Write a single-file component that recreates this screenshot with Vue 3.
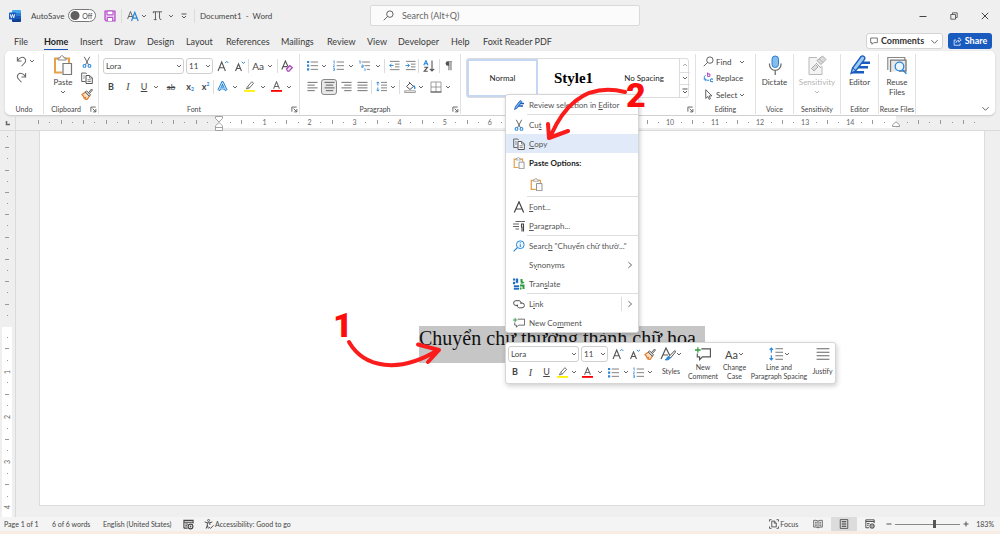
<script setup>
const tabs = ['File', 'Home', 'Insert', 'Draw', 'Design', 'Layout', 'References', 'Mailings', 'Review', 'View', 'Developer', 'Help', 'Foxit Reader PDF']

function marks(from, to, numbered) {
  const list = []
  for (let k = from; k <= to; k++) {
    if (numbered && k % 4 === 0) list.push({ k, kind: 'num', text: k / 4 })
    else list.push({ k, kind: k % 2 === 0 ? 'tick' : 'dot', text: '' })
  }
  return list
}
const left = marks(-16, -1, false)
const middle = marks(1, 59, true)
const right = marks(1, 7, false)
const above = marks(-17, -1, false)
const below = marks(1, 16, true)

const menu = [
  { icon: 'pen', label: ['Review selection in ', 'E', 'ditor'] },
  { line: true },
  { icon: 'cut', label: ['Cu', 't', ''] },
  { icon: 'copy', label: ['', 'C', 'opy'], active: true },
  { icon: 'paste', heading: 'Paste Options:' },
  { paste: true },
  { line: true },
  { icon: 'bigA', label: ['', 'F', 'ont...'] },
  { icon: 'para', label: ['', 'P', 'aragraph...'] },
  { line: true },
  { icon: 'lookup', label: ['Searc', 'h', ' "Chuyển chữ thườ..."'] },
  { label: ['S', 'y', 'nonyms'], more: true },
  { icon: 'translate', label: ['Tran', 's', 'late'] },
  { line: true },
  { icon: 'link', label: ['L', 'i', 'nk'], more: true, split: true },
  { icon: 'comment', label: ['New Co', 'm', 'ment'] },
]
</script>

<template>
  <div class="app">
    <svg class="sprite" aria-hidden="true">
      <symbol id="chev" viewBox="0 0 6 6"><path d="M1 2l2 2 2-2" fill="none" stroke="#555" stroke-width=".9" /></symbol>
      <symbol id="chevUp" viewBox="0 0 6 6"><path d="M1 4l2-2 2 2" fill="none" stroke="#999" stroke-width=".8" /></symbol>
      <symbol id="chevPale" viewBox="0 0 6 6"><path d="M1 2l2 2 2-2" fill="none" stroke="#aaa" stroke-width=".8" /></symbol>
      <symbol id="chevWide" viewBox="0 0 10 10"><path d="M1.500 3.500L5 7l3.500-3.500" fill="none" stroke="#555" /></symbol>
      <symbol id="chevBar" viewBox="0 0 6 6"><path d="M.5 1h5M1 3l2 2 2-2" fill="none" stroke="#444" stroke-width=".9" /></symbol>
      <symbol id="chevRight" viewBox="0 0 8 10"><path d="M2 1.5L6 5 2 8.500" fill="none" stroke="#444" /></symbol>
      <symbol id="word" viewBox="0 0 12 12">
        <rect x="3" width="9" height="12" rx="1" fill="#41a5ee" /><rect x="3" y="3" width="9" height="3" fill="#2b7cd3" /><rect x="3" y="6" width="9" height="3" fill="#185abd" /><path d="M3 9h9v2a1 1 0 0 1-1 1H4a1 1 0 0 1-1-1z" fill="#103f91" />
        <rect y="2.500" width="7" height="7" rx=".8" fill="#185abd" /><path d="M1.300 4.200l1 3.600 1.200-3.400 1.200 3.400 1-3.600" fill="none" stroke="#fff" stroke-width=".9" />
      </symbol>
      <symbol id="save" viewBox="0 0 12 12"><path d="M1 1h10v10H2.200L1 9.800z" fill="#e9c8ef" stroke="#b146c2" stroke-width="1.200" /><path d="M3 1h6v3.800H3zM3.300 11V7.500h5.400V11" fill="#fff" stroke="#b146c2" /></symbol>
      <symbol id="aa" viewBox="0 0 12 12"><path d="M.6 9L3.500 1.500 6 8M1.600 6.500h3.500" fill="none" stroke="#666" /><path d="M4.500 11L7.800 2.500 11.200 11M5.700 8.200h4.200" fill="none" stroke="#2b88d8" stroke-width="1.200" /></symbol>
      <symbol id="pi" viewBox="0 0 12 12"><path d="M1 2h10M3.800 2v8.500M2 10.500h3M8.200 2v7q0 1.500 2 1.300M1.500 2v1.500" fill="none" stroke="#555" /></symbol>
      <symbol id="search" viewBox="0 0 12 12"><circle cx="7.500" cy="4.500" r="3.500" fill="none" stroke="#555" /><path d="M5 7L.8 11.200" stroke="#555" /></symbol>
      <symbol id="undo" viewBox="0 0 12 12"><path d="M1.500 1v4.500H6M1.500 5.300C3.500 2 7 .3 9.300 2.200c2.200 2 1.200 4.300-.5 6L6 11.200" fill="none" stroke="#666" stroke-width="1.100" /></symbol>
      <symbol id="redo" viewBox="0 0 12 12"><path d="M10.500 1v4.500H6M10.500 5.300C8.500 2 5 .3 2.700 2.200c-2.200 2-1.200 4.300.5 6L6 11.200" fill="none" stroke="#666" stroke-width="1.100" /></symbol>
      <symbol id="paste" viewBox="0 0 20 20"><path d="M9 17.500H2V3.500h14V8" fill="none" stroke="#e8a04a" stroke-width="2" /><path d="M5 5V3h2c0-3 4-3 4 0h2v2z" fill="#fff" stroke="#888" /><path d="M10 8.500h8.500v11H10z" fill="#fafafa" stroke="#777" stroke-width="1.200" /></symbol>
      <symbol id="cut" viewBox="0 0 12 12"><path d="M3.300 .8l4.200 8M8.700 .8l-4.200 8" stroke="#666" fill="none" stroke-width="1" /><circle cx="3.500" cy="9.900" r="1.400" fill="none" stroke="#2b88d8" stroke-width="1.100" /><circle cx="8.500" cy="9.900" r="1.400" fill="none" stroke="#2b88d8" stroke-width="1.100" /></symbol>
      <symbol id="copy" viewBox="0 0 12 12"><path d="M4.500 9.500H.7V1h4l1 1" fill="none" stroke="#666" /><path d="M5 3.500h3.800l2.500 2.500v5.500H5z" fill="#fff" stroke="#555" /><path d="M8.500 3.500V6h2.800M6.500 7.800h3.300M6.500 9.500h3.300M2.200 4h1.600M2.200 6h1.600" fill="none" stroke="#666" stroke-width=".8" /></symbol>
      <symbol id="painter" viewBox="0 0 12 12"><path d="M1 6.500l3.500-2.500 4 4L6 11.500 4 11l.5-1.500L3 10l-.3-1.400z" fill="#fbe3cd" stroke="#e07b28" stroke-width="1.200" /><path d="M4.200 4l1.400-1.200 4 4L8.300 8.200zM7.500 4.500L10.500 1l1 1-3 3.500" fill="#ddd" stroke="#555" stroke-width=".9" /></symbol>
      <symbol id="growA" viewBox="0 0 12 12"><path d="M1 11L4.700 2l3.700 9M2.300 7.800h4.800" fill="none" stroke="#555" stroke-width="1.100" /><path d="M8.200 3l1.600-1.600L11.400 3" fill="none" stroke="#2b88d8" /></symbol>
      <symbol id="shrinkA" viewBox="0 0 12 12"><path d="M1.500 11l3-7 3 7M2.600 8.500h3.800" fill="none" stroke="#555" stroke-width="1.100" /><path d="M7.800 1.800l1.600 1.600L11 1.800" fill="none" stroke="#2b88d8" /></symbol>
      <symbol id="clearA" viewBox="0 0 12 12"><path d="M.8 9.500L4.400 1l3 6.500M2 6.600h4" fill="none" stroke="#555" stroke-width="1.100" /><path d="M5.500 9L8.800 5.500l2.500 2.200L8 11.200H6.800z" fill="#f1dcf4" stroke="#a43ab5" stroke-width="1.100" /></symbol>
      <symbol id="effectA" viewBox="0 0 12 12"><path d="M1.800 10.500L6 1.500l4.200 9M3.500 7.800h5" fill="none" stroke="#2b88d8" stroke-width="3" stroke-linejoin="round" /><path d="M1.800 10.500L6 1.500l4.200 9M3.500 7.800h5" fill="none" stroke="#d9ecfa" stroke-width="1" /></symbol>
      <symbol id="hilite" viewBox="0 0 12 12"><path d="M0 9.800h12v2H0z" fill="#fff200" /><path d="M4 6L8.500.8l2 1.700L6 7.500zM4 6L2.500 8.500l2.200-.3L6 7.500" fill="#fff" stroke="#666" /></symbol>
      <symbol id="fontColor" viewBox="0 0 12 12"><path d="M0 9.800h12v2H0z" fill="#f00" /><path d="M2.800 8.500L6 .8l3.200 7.700M4 6h4" fill="none" stroke="#666" stroke-width="1.100" /></symbol>
      <symbol id="bullets" viewBox="0 0 12 12"><path d="M0 1h2.400v2.400H0zM0 5h2.400v2.400H0zM0 9h2.400v2.400H0z" fill="#2b88d8" /><path d="M4 2.200h8M4 6.200h8M4 10.200h8" stroke="#777" /></symbol>
      <symbol id="numbers" viewBox="0 0 12 12"><path d="M.4 1.300l.9-.5V4M.3 5.200q1.800-.3 1 1L.3 7.500h1.500M.3 9h1.400v2.500H.3M.5 10.200h1" fill="none" stroke="#2b88d8" stroke-width=".8" /><path d="M4 2.200h8M4 6.200h8M4 10.200h8" stroke="#777" /></symbol>
      <symbol id="multi" viewBox="0 0 12 12"><path d="M.4 1.200l.8-.4V4M3 5.500h1.500V8H3V6.700h1M6.500 9v3" fill="none" stroke="#2b88d8" stroke-width=".9" /><path d="M3 2.200h9M6 6.200h6M8.500 10.200H12" stroke="#777" /></symbol>
      <symbol id="outdent" viewBox="0 0 12 12"><path d="M1 1.500h10.500M6.500 4.500h5M6.500 7.500h5M1 10.500h10.500" stroke="#777" /><path d="M5 6H.8M2.800 4L.8 6l2 2" fill="none" stroke="#2b88d8" /></symbol>
      <symbol id="indent" viewBox="0 0 12 12"><path d="M1 1.500h10.500M6.500 4.500h5M6.500 7.500h5M1 10.500h10.500" stroke="#777" /><path d="M.5 6h4.300M2.800 4l2 2-2 2" fill="none" stroke="#2b88d8" /></symbol>
      <symbol id="sort" viewBox="0 0 12 12"><path d="M.8 5.300L2.900.6 5 5.300M1.500 3.800h2.800" fill="none" stroke="#2b88d8" stroke-width="1.100" /><path d="M1.200 7.200h3.400L1.200 11.300h3.600M9 .5v10.500M6.800 8.800L9 11l2.200-2.200" fill="none" stroke="#555" stroke-width="1.100" /></symbol>
      <symbol id="pilcrow" viewBox="0 0 12 12"><path d="M10 1.300H5.300a2.500 2.500 0 0 0 0 5H6v5h1V2h1.200v9.300h1V2H10z" fill="#555" /></symbol>
      <symbol id="alignL" viewBox="0 0 12 12"><path d="M.5 1.500h11M.5 4.500h8M.5 7.500h11M.5 10.500h8" stroke="#666" /></symbol>
      <symbol id="alignC" viewBox="0 0 12 12"><path d="M.5 1.500h11M2 4.500h8M.5 7.500h11M2 10.500h8" stroke="#555" /></symbol>
      <symbol id="alignR" viewBox="0 0 12 12"><path d="M.5 1.500h11M3.500 4.500h8M.5 7.500h11M3.500 10.500h8" stroke="#666" /></symbol>
      <symbol id="alignJ" viewBox="0 0 12 12"><path d="M.5 1.500h11M.5 4.500h11M.5 7.500h11M.5 10.500h11" stroke="#666" /></symbol>
      <symbol id="spacing" viewBox="0 0 12 12"><path d="M2 1v4M.5 2.500L2 1l1.500 1.500M2 7v4M.5 9.500L2 11l1.500-1.500" fill="none" stroke="#2b88d8" /><path d="M5.500 1.500H12M5.500 4.500H12M5.500 7.500H12M5.500 10.500H12" stroke="#777" /></symbol>
      <symbol id="bucket" viewBox="0 0 12 12"><path d="M2.500 5.500L6 2l3.500 3.500L6 8.500zM4.800.8L7 3" fill="#fff" stroke="#555" /><path d="M9.500 4.500q2 1.500 1 3.500" fill="none" stroke="#2b88d8" stroke-width="1.300" /><path d="M.7 9.800h10.600v1.700H.7z" fill="#fff" stroke="#777" stroke-width=".7" /></symbol>
      <symbol id="borders" viewBox="0 0 12 12"><path d="M1 1h10v10H1zM6 1v10M1 6h10" fill="none" stroke="#888" stroke-width=".8" /><path d="M.5 11h11" stroke="#555" /></symbol>
      <symbol id="launch" viewBox="0 0 8 8"><path d="M1 6.500V1.200h5.500M3 3l3.500 3.500M6.700 3.500v3.200H3.500" fill="none" stroke="#555" /></symbol>
      <symbol id="replace" viewBox="0 0 12 12"><path d="M5 .5v4.300M5 3q0-1 1.300-1T7.600 3.500 6.300 5 5 4" fill="none" stroke="#b146c2" stroke-width="1.100" /><path d="M2.800 3.500Q.5 5 1.500 7.500L4.500 9M2.500 6.500L1.300 8l1.800 2" fill="none" stroke="#2b88d8" /><path d="M11 8q-3-1.300-3 1t3 1.300M4.500 9h2" fill="none" stroke="#2b88d8" stroke-width="1.200" /></symbol>
      <symbol id="select" viewBox="0 0 12 12"><path d="M3 .8v9.500l2.300-2.200L6.700 11.300l1.400-.7L6.800 7.500h3z" fill="#fff" stroke="#555" /></symbol>
      <symbol id="mic" viewBox="0 0 20 20"><rect x="7" y="1" width="6.500" height="11.500" rx="3.200" fill="#83bdec" stroke="#2b7cd3" /><path d="M4.500 8.500v1a5.700 5.700 0 0 0 11.500 0v-1M10.200 15.500V20" fill="none" stroke="#666" stroke-width="1.200" /></symbol>
      <symbol id="sens" viewBox="0 0 20 20"><path d="M10 2.500H2v17h13V11" fill="#f4f4f4" stroke="#b8b8b8" /><path d="M4.500 13.500l4-4 2.500 2.500-4 4zM9 8l5 5M10 5.500L15.500 1l3.500 3.500-5 5zM12.500 4l3.500 3.500" fill="#ddd" stroke="#aaa" /></symbol>
      <symbol id="editor" viewBox="0 0 20 20"><path d="M8.500 6.500H20V9l-2 0H8zM6 11h12v2.500H5zM2 16h12v2.500H1z" fill="#185abd" /><path d="M1 18.500L2.500 13 11 1.500q1.500-1.300 3 0t.500 3L6 15.500z" fill="#9cc9f0" stroke="#185abd" stroke-width="1.300" /><path d="M2.500 13L6 15.500" stroke="#185abd" /></symbol>
      <symbol id="pen" viewBox="0 0 12 12"><path d="M6 4.500h5M4 7h6" stroke="#185abd" stroke-width="1.300" /><path d="M1.500 10.500L2.500 7.500 6.800 2q1.500-1 2 .8L4.300 9z" fill="#6ea9e6" stroke="#185abd" stroke-width=".8" /></symbol>
      <symbol id="reuse" viewBox="0 0 20 20"><path d="M.8 15V2.500h17V5" fill="none" stroke="#888" stroke-width="1.200" /><path d="M3.500 17V5.200H19V16H12" fill="#e8e8e8" stroke="#777" stroke-width="1.300" /><circle cx="12.500" cy="11.500" r="4.300" fill="#eaf5fd" stroke="#2b88d8" stroke-width="1.300" /><path d="M15.500 14.800l4 4" stroke="#2b88d8" stroke-width="1.500" /></symbol>
      <symbol id="bubble" viewBox="0 0 12 12"><path d="M1 1.500h10v7H5.500L3 11V8.500H1z" fill="none" stroke="#444" stroke-width="1.100" /></symbol>
      <symbol id="share" viewBox="0 0 12 12"><path d="M4 4H1.500v7h8V8.500M3.800 8q.3-3.500 4-3.500V7L11 3.800 7.800 1v2" fill="none" stroke="#fff" stroke-width="1" /></symbol>
      <symbol id="bigA" viewBox="0 0 12 12"><path d="M1.300 11.500L6 .8l4.700 10.700M3 8h6" fill="none" stroke="#444" stroke-width="1.200" /></symbol>
      <symbol id="para" viewBox="0 0 12 12"><path d="M2.500 1.500H12M0 4h6M0 6.500h6M2.500 9H6" stroke="#666" /><path d="M11 4H8.500v3H9v4.500M10.500 4v7.500" fill="none" stroke="#444" stroke-width="1.100" /></symbol>
      <symbol id="lookup" viewBox="0 0 12 12"><circle cx="7.300" cy="4.700" r="3.900" fill="#eef7fe" stroke="#2b88d8" /><path d="M4.500 7.500L.6 11.400M7.300 4.200v2.800M7.300 2.300v1" stroke="#2b88d8" stroke-width="1.100" /></symbol>
      <symbol id="translate" viewBox="0 0 12 12"><path d="M0 .8h2v1.500H0zM3 .8h2v4H3zM0 4h2v2H0zM1 7.500h5v1.400H1zM1 10h5v1.500H1zM2 7.500v2" fill="#1f6fc4" stroke="#1f6fc4" stroke-width=".4" /><path d="M7.500 1h2v3.500h-2zM9.500 3l2 2-4 1zM7 6.500h4.500V11H9.500V8.500H7zM7 9.500h1.500v2H7z" fill="#2e9c3c" /></symbol>
      <symbol id="link" viewBox="0 0 12 12"><path d="M5 7.500H3a2.400 2.400 0 0 1 0-4.800h3a2.400 2.400 0 0 1 2.200 3M7 5h2a2.400 2.400 0 0 1 0 4.800H6.300A2.400 2.400 0 0 1 4.200 6.500" fill="none" stroke="#555" stroke-width="1" /></symbol>
      <symbol id="comment" viewBox="0 0 14 12"><path d="M5.500 1.500h8v7H6.500L4 11V8.500H2V5.500" fill="none" stroke="#555" /><path d="M2.500 0v5M0 2.500h5" stroke="#2e9c3c" stroke-width="1.100" /></symbol>
      <symbol id="stylesA" viewBox="0 0 16 14"><path d="M1 12L6 1l4 8M3 8h5" fill="none" stroke="#555" stroke-width="1.200" /><path d="M14.800 3.500L9 9.500l1.500 1.500L15.500 5z" fill="#fff" stroke="#555" /><path d="M9 9.500q-2 0-2.300 2-.3 1-1.700 1.300 3.500 1 5.500-1.800z" fill="#2b88d8" stroke="#2b88d8" /></symbol>
      <symbol id="macro" viewBox="0 0 12 12"><path d="M1 10V1.500h10V5M1 3.500h10M2.500 5.500h3M2.500 7.500h2M1 10h4" fill="none" stroke="#444" stroke-width="1.200" /><circle cx="8.200" cy="8.200" r="2.600" fill="#fff" stroke="#444" stroke-width="1.200" /><circle cx="8.200" cy="8.200" r="1" fill="#444" /></symbol>
      <symbol id="access" viewBox="0 0 12 12"><circle cx="5.500" cy="1.700" r="1.200" fill="none" stroke="#444" /><path d="M.8 3.500L4 4.500v3L2.500 11.500M10 3.500L7 4.500v2.500M4 4.500h3M4 7.500l1.200 4M6 9.500l1.800 1.800L11.500 7.500" fill="none" stroke="#444" stroke-width="1.100" /></symbol>
      <symbol id="focus" viewBox="0 0 12 12"><path d="M.6 3V.8H3M9 .8h2.400V3M.6 9v2.200H3M9 11.200h2.400V9" fill="none" stroke="#444" /><path d="M3.300 2.500h3.200l2.200 2.200v4.800H3.300zM6.300 2.500v2.400h2.400" fill="none" stroke="#444" /></symbol>
      <symbol id="read" viewBox="0 0 12 12"><path d="M6 2.500Q3.500 1 .8 1.700v8q2.700-.6 5.200.9 2.500-1.500 5.200-.9v-8Q8.500 1 6 2.500zM6 2.500v8M2.300 4h2.300M2.300 6h2.300M2.300 8h2.300M7.500 4h2.300M7.500 6h2.300M7.500 8h2.300" fill="none" stroke="#555" /></symbol>
      <symbol id="print" viewBox="0 0 12 12"><path d="M1.500.7h9v10.600h-9zM3.300 3h5.400M3.300 5h5.400M3.300 7h5.400M3.300 9h5.400" fill="none" stroke="#444" /></symbol>
      <symbol id="web" viewBox="0 0 12 12"><path d="M1 10.500V1h10v4M1 3h10M2.500 5.500h3M2.500 7.500h2M1 10.500h4" fill="none" stroke="#444" stroke-width="1.100" /><circle cx="8.500" cy="8.500" r="2.700" fill="#777" stroke="#444" /><path d="M6 8.500h5M8.500 6v5" stroke="#ddd" stroke-width=".6" /></symbol>
    </svg>

    <header class="title">
      <div class="quick">
        <svg class="i12"><use href="#word" /></svg>
        <label class="autosave"><span>AutoSave</span><input type="checkbox" role="switch" /><span class="off">Off</span></label>
        <button aria-label="Save"><svg class="i12"><use href="#save" /></svg></button>
        <i class="bar"></i>
        <button aria-label="Text effects"><svg class="i12"><use href="#aa" /></svg></button>
        <button aria-label="More effects"><svg class="i6"><use href="#chev" /></svg></button>
        <button aria-label="Equation"><svg class="i11"><use href="#pi" /></svg></button>
        <button aria-label="More equations"><svg class="i6"><use href="#chev" /></svg></button>
        <button aria-label="Customize toolbar"><svg class="i6"><use href="#chevBar" /></svg></button>
        <i class="bar"></i>
        <span>Document1&nbsp; - &nbsp;Word</span>
      </div>
      <label class="find"><svg class="i11"><use href="#search" /></svg><input type="text" placeholder="Search (Alt+Q)" aria-label="Search" /></label>
      <div class="window">
        <button aria-label="Minimize"><svg class="i8" viewBox="0 0 8 8"><path d="M.5 4.500h7" stroke="#444" /></svg></button>
        <button aria-label="Restore"><svg class="i8" viewBox="0 0 8 8"><path d="M.8 2.500h4.700v4.700H.8zM2.500 2.300V.8h4.700v4.700H5.700" fill="none" stroke="#444" stroke-width=".8" /></svg></button>
        <button aria-label="Close"><svg class="i8" viewBox="0 0 8 8"><path d="M.8.8l6.400 6.400M7.200.8L.8 7.200" stroke="#444" /></svg></button>
      </div>
    </header>

    <nav class="tabs">
      <div class="tablist">
        <a v-for="t in tabs" :key="t" href="#" :class="{ on: t === 'Home' }">{{ t }}</a>
      </div>
      <button class="comments"><svg class="i8"><use href="#bubble" /></svg>Comments<svg class="i9"><use href="#chevWide" /></svg></button>
      <button class="share"><svg class="i9"><use href="#share" /></svg>Share</button>
    </nav>

    <section class="ribbon">
      <div class="group g-undo">
        <div class="body undo">
          <button aria-label="Undo"><svg class="i11"><use href="#undo" /></svg></button>
          <button aria-label="Undo list"><svg class="i6"><use href="#chev" /></svg></button>
          <button aria-label="Redo"><svg class="i11"><use href="#redo" /></svg></button>
        </div>
        <div class="name"><span>Undo</span></div>
      </div>
      <div class="group g-clip">
        <div class="body clip">
          <button class="tall"><svg class="i21"><use href="#paste" /></svg><span>Paste</span><svg class="i6"><use href="#chev" /></svg></button>
          <div class="stack">
            <button aria-label="Cut"><svg class="i12"><use href="#cut" /></svg></button>
            <button aria-label="Copy"><svg class="i12"><use href="#copy" /></svg></button>
            <button aria-label="Format Painter"><svg class="i12"><use href="#painter" /></svg></button>
          </div>
        </div>
        <div class="name"><span>Clipboard</span><button aria-label="Clipboard settings"><svg class="i7"><use href="#launch" /></svg></button></div>
      </div>
      <div class="group g-font">
        <div class="body rows">
          <div class="row font1">
            <label class="pick"><select aria-label="Font"><option>Lora</option></select><svg class="i6"><use href="#chev" /></svg></label>
            <label class="pick second"><select aria-label="Font size"><option>11</option></select><svg class="i6"><use href="#chev" /></svg></label>
            <button aria-label="Grow font"><svg class="i12"><use href="#growA" /></svg></button>
            <button aria-label="Shrink font"><svg class="i12"><use href="#shrinkA" /></svg></button>
            <i class="bar"></i>
            <button class="case">Aa</button>
            <button aria-label="Case list"><svg class="i6"><use href="#chev" /></svg></button>
            <i class="bar"></i>
            <button aria-label="Clear formatting"><svg class="i12"><use href="#clearA" /></svg></button>
          </div>
          <div class="row font2">
            <button class="b">B</button>
            <button class="it">I</button>
            <button class="u">U</button>
            <button aria-label="Underline list"><svg class="i6"><use href="#chev" /></svg></button>
            <button class="st">ab</button>
            <button class="x">x<sub>2</sub></button>
            <button class="x">x<sup>2</sup></button>
            <i class="bar"></i>
            <button aria-label="Text effects"><svg class="i11"><use href="#effectA" /></svg></button>
            <button aria-label="Effects list"><svg class="i6"><use href="#chev" /></svg></button>
            <button aria-label="Highlight"><svg class="i11"><use href="#hilite" /></svg></button>
            <button aria-label="Highlight list"><svg class="i6"><use href="#chev" /></svg></button>
            <button aria-label="Font colour"><svg class="i11"><use href="#fontColor" /></svg></button>
            <button aria-label="Colour list"><svg class="i6"><use href="#chev" /></svg></button>
          </div>
        </div>
        <div class="name"><span>Font</span><button aria-label="Font settings"><svg class="i7"><use href="#launch" /></svg></button></div>
      </div>
      <div class="group g-para">
        <div class="body rows">
          <div class="row para1">
            <button aria-label="Bullets"><svg class="i11"><use href="#bullets" /></svg></button>
            <button aria-label="Bullet list"><svg class="i6"><use href="#chev" /></svg></button>
            <button aria-label="Numbering"><svg class="i11"><use href="#numbers" /></svg></button>
            <button aria-label="Numbering list"><svg class="i6"><use href="#chev" /></svg></button>
            <button aria-label="Multilevel"><svg class="i11"><use href="#multi" /></svg></button>
            <button aria-label="Multilevel list"><svg class="i6"><use href="#chev" /></svg></button>
            <i class="bar"></i>
            <button aria-label="Decrease indent"><svg class="i11"><use href="#outdent" /></svg></button>
            <button aria-label="Increase indent" class="end"><svg class="i11"><use href="#indent" /></svg></button>
            <i class="bar"></i>
            <button aria-label="Sort"><svg class="i12"><use href="#sort" /></svg></button>
            <i class="bar"></i>
            <button aria-label="Show marks"><svg class="i11"><use href="#pilcrow" /></svg></button>
          </div>
          <div class="row para2">
            <button aria-label="Align left"><svg class="i11"><use href="#alignL" /></svg></button>
            <button aria-label="Centre" class="pressed"><svg class="i11"><use href="#alignC" /></svg></button>
            <button aria-label="Align right"><svg class="i11"><use href="#alignR" /></svg></button>
            <button aria-label="Justify"><svg class="i11"><use href="#alignJ" /></svg></button>
            <i class="bar"></i>
            <button aria-label="Line spacing"><svg class="i11"><use href="#spacing" /></svg></button>
            <button aria-label="Spacing list"><svg class="i6"><use href="#chev" /></svg></button>
            <i class="bar"></i>
            <button aria-label="Shading"><svg class="i12"><use href="#bucket" /></svg></button>
            <button aria-label="Shading list"><svg class="i6"><use href="#chev" /></svg></button>
            <button aria-label="Borders"><svg class="i12"><use href="#borders" /></svg></button>
            <button aria-label="Border list"><svg class="i6"><use href="#chev" /></svg></button>
          </div>
        </div>
        <div class="name"><span>Paragraph</span><button aria-label="Paragraph settings"><svg class="i7"><use href="#launch" /></svg></button></div>
      </div>
      <div class="group g-styles">
        <div class="body">
          <div class="gallery">
            <button class="chosen">Normal</button>
            <button class="style1">Style1</button>
            <button>No Spacing</button>
            <div class="scroll">
              <button aria-label="Previous styles"><svg class="i6"><use href="#chevUp" /></svg></button>
              <button aria-label="Next styles"><svg class="i6"><use href="#chev" /></svg></button>
              <button aria-label="All styles"><svg class="i6"><use href="#chevBar" /></svg></button>
            </div>
          </div>
        </div>
        <div class="name"><span></span><button aria-label="Style settings"><svg class="i7"><use href="#launch" /></svg></button></div>
      </div>
      <div class="group g-edit">
        <div class="body edit">
          <button><svg class="i11"><use href="#search" /></svg><span>Find</span><svg class="i6 far"><use href="#chev" /></svg></button>
          <button><svg class="i11"><use href="#replace" /></svg><span>Replace</span></button>
          <button><svg class="i11"><use href="#select" /></svg><span>Select</span><svg class="i6 far"><use href="#chev" /></svg></button>
        </div>
        <div class="name"><span>Editing</span></div>
      </div>
      <div class="group g-voice">
        <div class="body"><button class="tall"><svg class="i21"><use href="#mic" /></svg><span>Dictate</span></button></div>
        <div class="name"><span>Voice</span></div>
      </div>
      <div class="group g-sens">
        <div class="body"><button class="tall faint" disabled><svg class="i21"><use href="#sens" /></svg><span>Sensitivity</span><svg class="i6"><use href="#chevPale" /></svg></button></div>
        <div class="name"><span>Sensitivity</span></div>
      </div>
      <div class="group g-voice">
        <div class="body"><button class="tall"><svg class="i21"><use href="#editor" /></svg><span>Editor</span></button></div>
        <div class="name"><span>Editor</span></div>
      </div>
      <div class="group g-reuse">
        <div class="body"><button class="tall"><svg class="i21"><use href="#reuse" /></svg><span>Reuse<br />Files</span></button></div>
        <div class="name"><span>Reuse Files</span></div>
      </div>
      <button class="collapse" aria-label="Collapse ribbon"><svg class="i9"><use href="#chevWide" /></svg></button>
    </section>

    <div class="ruler">
      <div class="corner"><svg class="i6" viewBox="0 0 6 6"><path d="M1.500 1v3.500H5" fill="none" stroke="#666" stroke-width="1.500" /></svg></div>
      <div class="scale before"><span v-for="m in left" :key="m.k" :class="m.kind"></span></div>
      <div class="scale inside">
        <span v-for="m in middle" :key="m.k" :class="m.kind">{{ m.text }}</span>
        <svg class="marker start" viewBox="0 0 8 15"><path d="M.5.5h7v2L4 6 .5 2.500zM4 6.500l3.500 3.300v4.700h-7V9.800zM.5 11.500h7" fill="#fff" stroke="#999" stroke-width=".9" /></svg>
        <svg class="marker stop" viewBox="0 0 8 6"><path d="M4 .8l3.500 3v1.700h-7V3.800z" fill="#fff" stroke="#999" /></svg>
      </div>
      <div class="scale after"><span v-for="m in right" :key="m.k" :class="m.kind"></span></div>
    </div>

    <main class="work">
      <div class="vruler">
        <div class="vscale top"><span v-for="m in above" :key="m.k" :class="m.kind"></span></div>
        <div class="vscale lower"><span v-for="m in below" :key="m.k" :class="m.kind"><em v-if="m.text">{{ m.text }}</em></span></div>
      </div>
      <article class="page"><p><mark>Chuyển chữ thường thành chữ hoa</mark></p></article>
    </main>

    <footer class="status">
      <span class="s-page">Page 1 of 1</span>
      <span class="s-words">6 of 6 words</span>
      <span class="s-lang">English (United States)</span>
      <svg class="i11 s-macro"><use href="#macro" /></svg>
      <span class="s-acc"><svg class="i10"><use href="#access" /></svg>Accessibility: Good to go</span>
      <button class="s-focus"><svg class="i10"><use href="#focus" /></svg>Focus</button>
      <button class="view" aria-label="Read mode"><svg class="i10"><use href="#read" /></svg></button>
      <button class="view on" aria-label="Print layout"><svg class="i10"><use href="#print" /></svg></button>
      <button class="view" aria-label="Web layout"><svg class="i10"><use href="#web" /></svg></button>
      <button class="zoom" aria-label="Zoom out"><svg class="i6" viewBox="0 0 6 6"><path d="M.5 3h5" stroke="#555" /></svg></button>
      <input type="range" min="0" max="100" value="61" aria-label="Zoom" />
      <button class="zoom" aria-label="Zoom in"><svg class="i6" viewBox="0 0 6 6"><path d="M.5 3h5M3 .5v5" stroke="#555" /></svg></button>
      <span class="pct">183%</span>
    </footer>

    <div class="menu" role="menu">
      <template v-for="(m, i) in menu" :key="i">
        <hr v-if="m.line" />
        <div v-else-if="m.heading" class="item"><svg class="i12"><use :href="'#' + m.icon" /></svg><b>{{ m.heading }}</b></div>
        <div v-else-if="m.paste" class="item options"><button aria-label="Keep text"><svg class="i13"><use href="#paste" /></svg></button></div>
        <button v-else class="item" role="menuitem" :class="{ active: m.active }">
          <svg class="i12"><use v-if="m.icon" :href="'#' + m.icon" /></svg>
          <span>{{ m.label[0] }}<u>{{ m.label[1] }}</u>{{ m.label[2] }}</span>
          <i v-if="m.split" class="bar"></i>
          <svg v-if="m.more" class="i8"><use href="#chevRight" /></svg>
        </button>
      </template>
    </div>

    <div class="mini">
      <div class="minirows">
        <div class="row mini1">
          <label class="pick"><select aria-label="Mini font"><option>Lora</option></select><svg class="i6"><use href="#chev" /></svg></label>
          <label class="pick second"><select aria-label="Mini size"><option>11</option></select><svg class="i6"><use href="#chev" /></svg></label>
          <button aria-label="Grow font"><svg class="i12"><use href="#growA" /></svg></button>
          <button aria-label="Shrink font"><svg class="i12"><use href="#shrinkA" /></svg></button>
          <button aria-label="Format painter"><svg class="i12"><use href="#painter" /></svg></button>
        </div>
        <div class="row mini2">
          <button class="b">B</button>
          <button class="it">I</button>
          <button class="u">U</button>
          <button aria-label="Highlight"><svg class="i11"><use href="#hilite" /></svg></button>
          <button aria-label="Highlight list"><svg class="i6"><use href="#chev" /></svg></button>
          <button aria-label="Font colour"><svg class="i11"><use href="#fontColor" /></svg></button>
          <button aria-label="Colour list"><svg class="i6"><use href="#chev" /></svg></button>
          <button aria-label="Bullets"><svg class="i11"><use href="#bullets" /></svg></button>
          <button aria-label="Bullet list"><svg class="i6"><use href="#chev" /></svg></button>
          <button aria-label="Numbering"><svg class="i11"><use href="#numbers" /></svg></button>
          <button aria-label="Numbering list"><svg class="i6"><use href="#chev" /></svg></button>
        </div>
      </div>
      <button class="big single"><span class="pic"><svg class="i16"><use href="#stylesA" /></svg><svg class="i6"><use href="#chev" /></svg></span><span>Styles</span></button>
      <button class="big"><span class="pic"><svg class="i16"><use href="#comment" /></svg></span><span>New<br />Comment</span></button>
      <button class="big"><span class="pic large">Aa<svg class="i6"><use href="#chev" /></svg></span><span>Change<br />Case</span></button>
      <button class="big"><span class="pic"><svg class="i14"><use href="#spacing" /></svg><svg class="i6"><use href="#chev" /></svg></span><span>Line and<br />Paragraph Spacing</span></button>
      <button class="big single"><span class="pic"><svg class="i16"><use href="#alignJ" /></svg></span><span>Justify</span></button>
    </div>

    <span class="step one">1</span>
    <span class="step two">2</span>
    <svg class="arrow first" viewBox="0 0 100 40"><path d="M5 8C20 34 55 40 94 16M74 10.500L95 16l-11 12" /></svg>
    <svg class="arrow last" viewBox="0 0 90 60"><path d="M82 7C50-1 25 12 8 50M5 39l1 14 19-7" /></svg>
  </div>
</template>

<style>
body { background: #efefef; }
</style>

<style scoped>
.app { position: relative; display: flex; flex-direction: column; min-height: 100vh; background: #efefef; color: #444; font: 8px/10px Lato, "Open Sans", "Liberation Sans", sans-serif; overflow: hidden; }
.app * { box-sizing: border-box; }
button, input, select { font: inherit; color: inherit; background: none; border: 0; padding: 0; margin: 0; outline: 0; }
button { display: flex; align-items: center; justify-content: center; }
a { color: inherit; text-decoration: none; }
svg { display: block; flex: none; }
.sprite { position: absolute; width: 0; height: 0; }
.i6 { width: 6px; height: 6px; } .i7 { width: 7px; height: 7px; } .i8 { width: 8px; height: 8px; } .i9 { width: 9px; height: 9px; }
.i10 { width: 10px; height: 10px; } .i11 { width: 11px; height: 11px; } .i12 { width: 12px; height: 12px; } .i13 { width: 13px; height: 13px; }
.i14 { width: 16px; height: 14px; } .i16 { width: 16px; height: 14px; } .i21 { width: 20px; height: 20px; }
.bar { width: 1px; height: 14px; background: #dcdcdc; }

.title { display: grid; grid-template-columns: 370fr 270fr 360fr; align-items: center; height: 31px; }
.quick { display: grid; grid-template-columns: 22px 73px 12px 10px 13px 10px 17px 9px 17px 5px auto; align-items: center; justify-items: center; justify-content: start; padding-left: 9px; white-space: nowrap; }
.quick > svg { justify-self: start; }
.quick > span { padding-left: 3px; }
.autosave { display: flex; align-items: center; position: relative; justify-self: start; gap: 4px; }
.autosave input { appearance: none; width: 28px; height: 13px; border: 1px solid #777; border-radius: 7px; background: radial-gradient(circle at 6px 50%, #606060 4px, transparent 5px) #fff; }
.off { position: absolute; right: 4px; font-size: 7px; }
.find { display: flex; align-items: center; gap: 8px; height: 21px; padding-left: 12px; background: #fbfbfb; border: 1px solid #d9d9d9; border-radius: 2px; }
.find input { flex: 1; font-size: 9px; }
.find input::placeholder { color: #666; opacity: 1; }
.window { display: flex; justify-content: flex-end; }
.window button { width: 31px; height: 31px; }

.tabs { display: flex; align-items: center; height: 20px; padding: 0 8px 0 14px; }
.tablist { flex: 1; display: grid; grid-template-columns: 30px 36px 34px 33px 39px 40px 55px 46px 40px 31px 53px 32px auto; justify-items: start; font-size: 9px; line-height: 14px; color: #3a3a3a; white-space: nowrap; }
.tablist a { height: 18px; padding-top: 3px; }
.tablist .on { font-weight: bold; border-bottom: 1px solid #185abd; color: #222; }
.comments, .share { height: 16px; border-radius: 3px; font-size: 9px; font-weight: bold; gap: 3px; }
.comments { width: 77px; background: #fff; border: 1px solid #d4d4d4; color: #333; margin-right: 5px; }
.comments svg:last-child { margin-left: 3px; }
.share { width: 44px; background: #185abd; color: #fff; }

.ribbon { display: flex; height: 64px; margin: 0 5px; padding: 3px 0 1px; background: #fff; border-radius: 5px; box-shadow: 0 1px 2px #c4c4c4; }
.group { display: flex; flex-direction: column; flex: none; border-right: 1px solid #e2e2e2; }
.g-undo { width: 39px; } .g-clip { width: 55px; } .g-font { width: 201px; } .g-para { width: 161px; } .g-styles { width: 235px; }
.g-edit { width: 60px; } .g-voice { width: 38px; } .g-sens { width: 47px; } .g-reuse { width: 37px; }
.body { flex: 1; }
.name { display: flex; align-items: center; height: 10px; font-size: 7px; white-space: nowrap; }
.name span { flex: 1; display: flex; justify-content: center; }
.name button { width: 10px; }
.undo { display: grid; grid-template-columns: 12px 10px; grid-template-rows: 14px 18px; align-items: center; padding-left: 10px; }
.clip { display: grid; grid-template-columns: 36px 10px; padding-left: 1px; }
.stack { display: grid; grid-template-rows: 15px 17px 16px; justify-items: center; }
.tall { flex-direction: column; justify-content: flex-start; width: 100%; gap: 2px; padding-top: 1px; text-align: center; }
.faint { color: #b5b5b5; }
.rows { padding: 1px 0 0 4px; }
.row { display: grid; height: 21px; align-items: center; justify-items: center; }
.row .end { justify-self: end; }
.font1 { grid-template-columns: 81px 29px 20px 14px 2px 18px 5px 10px 10px; }
.font2 { grid-template-columns: 16px 18px 14px 10px 20px 18px 13px 2px 17px 8px 20px 7px 20px 6px; }
.para1 { grid-template-columns: 16px 8px 20px 6px 21px 5px 9px 10px 17px 5px 16px 4px 14px; }
.para2 { grid-template-columns: 17px 16px 18px 15px 2px 18px 5px 9px 12px 10px 19px 6px; }
.pick { position: relative; width: 100%; height: 16px; border: 1px solid #cfcfcf; border-radius: 3px; background: #fff; display: flex; align-items: center; }
.pick.second { width: 27px; justify-self: end; }
.pick select { appearance: none; width: 100%; height: 100%; padding-left: 2px; }
.pick svg { position: absolute; right: 1px; pointer-events: none; }
.case { font-size: 10px; }
.b { font-weight: bold; font-size: 9px; }
.it { font: italic 10px "Liberation Serif", serif; }
.u { text-decoration: underline; font-size: 9px; }
.st { text-decoration: line-through; }
.x { font-size: 9px; font-weight: bold; }
.x sub, .x sup { font-size: 5px; line-height: 5px; color: #2b88d8; }
.x sub { align-self: flex-end; } .x sup { align-self: flex-start; }
.pressed { width: 16px; height: 16px; border: 1px solid #888; border-radius: 3px; background: #e8e8e8; }
.gallery { display: grid; grid-template-columns: 71px 71px 70px 11px; height: 40px; margin: 4px 6px 0 5px; border: 1px solid #dcdcdc; border-radius: 3px; color: #222; }
.gallery .chosen { border: 2px solid #c5d7f3; }
.gallery .style1 { font: bold 15px "Liberation Serif", serif; color: #000; }
.scroll { display: grid; grid-template-rows: repeat(3, 1fr); border-left: 1px solid #dcdcdc; }
.scroll button + button { border-top: 1px solid #dcdcdc; }
.edit { display: grid; grid-template-rows: 15px 17px 17px; align-items: center; padding: 0 11px 0 7px; }
.edit button { justify-content: flex-start; gap: 2px; height: 15px; }
.edit .far { margin-left: auto; }
.collapse { margin-left: auto; align-self: flex-end; width: 20px; height: 12px; }

.ruler { display: grid; grid-template-columns: 16px 203px 677px 1fr; height: 16px; border-bottom: 1px solid #dadada; }
.corner { display: grid; place-items: center; border-right: 1px solid #dadada; }
.scale { position: relative; display: flex; align-items: center; height: 12px; margin-top: 1px; font-size: 7px; color: #666; }
.scale span { flex: 1; display: flex; justify-content: center; }
.before { padding: 0 6px 0 17px; }
.inside { background: #fff; padding: 0 6px; }
.after { padding: 0 20px 0 6px; }
.tick::before { content: ""; width: 1px; height: 4px; background: #999; }
.dot::before { content: ""; width: 1px; height: 1px; background: #999; }
.marker { position: absolute; }
.start { left: -4px; top: 0; width: 8px; height: 15px; }
.stop { right: -4px; top: 5px; width: 8px; height: 6px; }

.work { flex: 1; display: flex; min-height: 386px; }
.vruler { display: grid; grid-template-rows: 196px 1fr; width: 16px; padding: 0 3px 0 2px; border-right: 1px solid #dadada; }
.vscale { display: flex; flex-direction: column; font-size: 7px; line-height: 8px; color: #666; }
.vscale span { flex: 1 1 0; min-height: 0; display: flex; align-items: center; justify-content: center; }
.top { padding-bottom: 6px; }
.lower { background: #fff; padding: 5px 0 4px; }
.vscale em { font-style: normal; height: 8px; transform: rotate(-90deg); }
.vscale .tick::before { width: 4px; height: 1px; }
.page { flex: 1; margin: 0 15px 11px 23px; padding: 195px 89px 0 180px; background: #fff; border: 1px solid #dcdcdc; border-top: 0; text-align: center; }
.page p { margin: 0; }
mark { display: inline-block; margin-right: -9px; padding: 0 9px 13px 0; background: #c6c6c6; color: #111; font: 20px/24px "Liberation Serif", serif; white-space: nowrap; }

.status { display: flex; align-items: center; height: 17px; background: #f4f4f4; border-bottom: 3px solid #f9ece2; padding: 0 6px 0 4px; font-size: 7px; white-space: nowrap; }
.s-page { width: 48px; } .s-words { width: 51px; } .s-lang { width: 80px; } .s-macro { margin-right: 10px; }
.s-acc { display: flex; gap: 1px; flex: 1; }
.s-focus { gap: 1px; margin-right: 7px; }
.view { width: 26px; height: 14px; }
.view.on { background: #dcdcdc; }
.zoom { width: 12px; height: 12px; }
.status input { appearance: none; width: 65px; height: 10px; background: linear-gradient(#888, #888) center / 100% 1px no-repeat; }
.status input::-webkit-slider-thumb { appearance: none; width: 3px; height: 8px; background: #555; }
.pct { padding-left: 4px; }

.menu { position: absolute; left: 505px; top: 94px; width: 134px; background: #fff; border: 1px solid #d6d6d6; border-radius: 3px; box-shadow: 1px 2px 4px #0003; overflow: hidden; color: #555; }
.menu hr { height: 1px; margin: 0 0 0 21px; border: 0; background: #dedede; }
.item { display: flex; align-items: center; justify-content: flex-start; width: 100%; height: 19px; padding: 0 4px 0 7px; gap: 4px; white-space: nowrap; }
.item b { color: #222; }
.item span { flex: 1; text-align: left; }
.item.active { background: #e1eaf8; }
.options { height: 24px; padding-left: 24px; }

.mini { position: absolute; left: 505px; top: 342px; width: 331px; height: 42px; display: grid; grid-template-columns: 150px 30px 34px 29px 60px 27px; background: #fff; border: 1px solid #d6d6d6; border-radius: 3px; box-shadow: 1px 2px 5px #0003; padding-top: 2px; }
.minirows { padding-left: 2px; }
.minirows .row { height: 18px; }
.mini1 { grid-template-columns: 71px 29px 20px 14px 16px; }
.mini2 { grid-template-columns: 14px 17px 15px 16px 8px 18px 8px 18px 7px 19px 4px; }
.big { flex-direction: column; justify-content: flex-start; font-size: 7px; line-height: 9px; white-space: nowrap; }
.pic { display: flex; align-items: center; justify-content: center; height: 18px; }
.single { gap: 4px; }
.large { font-size: 11px; }

.step { position: absolute; font: 900 34px/28px Roboto, sans-serif; color: #fb0d0d; }
.one { left: 333px; top: 311px; }
.two { left: 626px; top: 81px; }
.arrow { position: absolute; fill: none; stroke: #fb1c1c; stroke-width: 4px; stroke-linecap: round; stroke-linejoin: round; pointer-events: none; }
.first { left: 344px; top: 334px; width: 100px; height: 40px; }
.last { left: 543px; top: 85px; width: 90px; height: 60px; }
</style>
